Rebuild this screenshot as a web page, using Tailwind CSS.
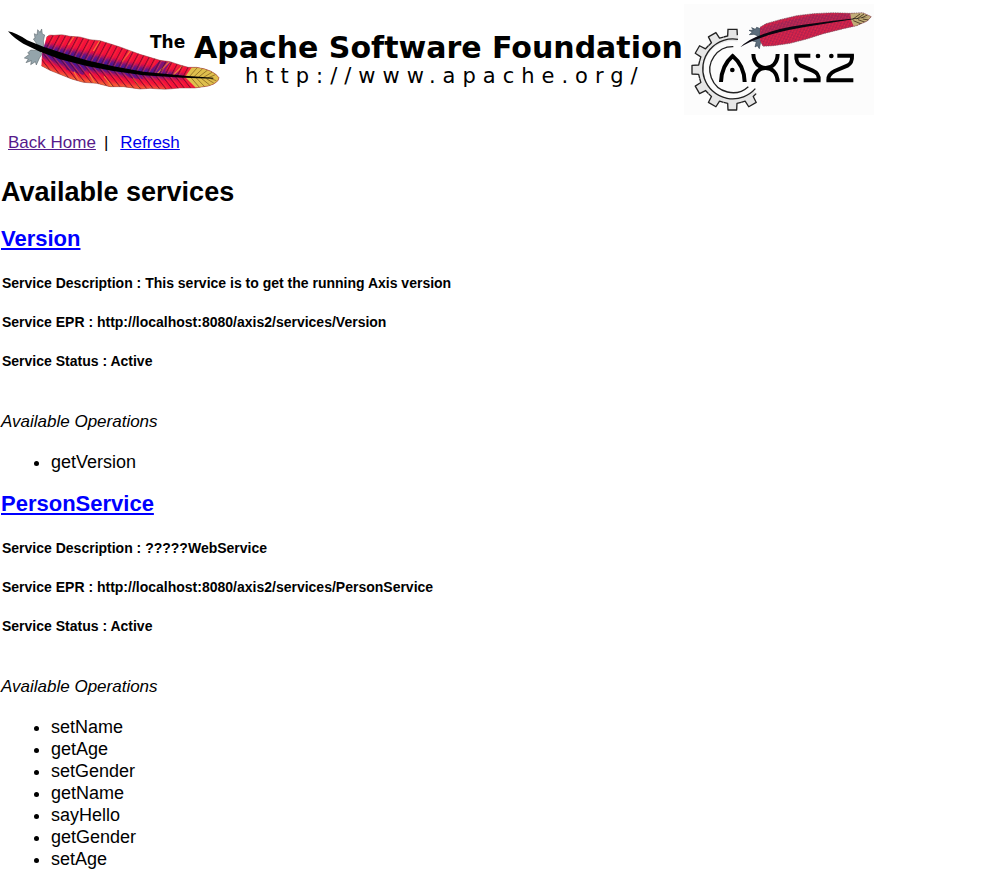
<!DOCTYPE html>
<html lang="en">
<head>
<meta charset="utf-8">
<meta name="viewport" content="width=device-width, initial-scale=1">
<title>List Services</title>
<script src="https://cdn.jsdelivr.net/npm/@tailwindcss/browser@4"></script>
</head>
<body class="bg-white font-['Liberation_Sans',Arial,sans-serif] text-black">
<header class="flex items-start pl-2 pt-1">
  <svg class="h-[111px] w-[676px] shrink-0" viewBox="8 4 676 111" role="img" aria-label="The Apache Software Foundation">
    <defs>
      <pattern id="barbUp" width="19" height="90" patternUnits="userSpaceOnUse" patternTransform="skewX(-28)">
        <path d="M2 0V90" stroke="#5a0a24" stroke-width="2.5"/>
        <path d="M7 0V90" stroke="#ff3a38" stroke-width="3" opacity=".6"/>
      </pattern>
      <pattern id="barbDown" width="19" height="90" patternUnits="userSpaceOnUse" patternTransform="skewX(38)">
        <path d="M2 0V90" stroke="#5a0a24" stroke-width="2.5"/>
        <path d="M7 0V90" stroke="#ff3a38" stroke-width="3" opacity=".6"/>
      </pattern>
      <clipPath id="vane"><path d="M140 66Q148 57 162 61L185 59L210 64L240 66L270 74L300 77L335 88L360 96L390 107L420 118L450 127L480 136L510 140L540 150L565 157L590 157Q640 164 657 188Q656 204 625 213L585 219L540 219L495 223L450 220L420 222L370 215L330 215L290 205L250 202L215 192L180 178L150 166L124 152L126 118Z"/></clipPath>
      <filter id="soften" x="-10%" y="-20%" width="120%" height="140%"><feGaussianBlur stdDeviation="6"/></filter>
    </defs>
    <g transform="translate(0 15) scale(.33333)">
      <g fill="#94a4ab" stroke="#4c585e" stroke-width="1.5">
        <path d="M112 89L100 72L105 70L103 56L111 60L113 44L120 52L125 42L127 57L134 60L130 78L133 99Z"/>
        <path d="M120 107L92 105L83 114L89 117L73 129L85 132L78 143L94 137L92 149L106 140L109 150L119 128L126 118Z"/>
      </g>
      <g clip-path="url(#vane)">
        <rect x="110" y="40" width="560" height="200" fill="#f5103a"/>
        <path d="M124 84L180 98L280 120L360 142L430 156L480 166L540 177L560 188L490 188L400 186L320 173L240 164L180 149L126 126Z" fill="#4a1294" filter="url(#soften)"/>
        <path d="M448 170L478 138L512 142L488 176ZM370 170L390 188L430 193L415 172ZM190 140L260 158L250 180L200 164Z" fill="#5a148c" opacity=".75"/>
        <path d="M124 146L170 168L230 188L290 198L360 208L440 215L500 219V240H120Z" fill="#f7a235" opacity=".7" filter="url(#soften)"/>
        <path d="M225 60L205 90M300 76L280 108M392 107L366 140M508 140L470 178M548 152L520 180M236 196L222 170M284 204L268 176M336 214L312 184M420 218L398 190" stroke="#f89038" stroke-width="4" opacity=".8"/>
        <path d="M100 40H700V188L555 184L400 170L300 151L200 128L124 102Z" fill="url(#barbUp)"/>
        <path d="M124 102L200 128L300 151L400 170L555 184L700 188V240H100Z" fill="url(#barbDown)"/>
        <path d="M555 186L580 150H670V226H595Z" fill="#dfbf4d"/>
        <path d="M567 186L592 158M581 186L608 161M595 187L623 165M609 188L636 172M623 189L646 179M573 188L600 219M589 189L615 216M604 190L629 210M619 191L641 204M632 191L649 197" fill="none" stroke="#765319" stroke-width="2"/>
      </g>
      <path d="M140 66Q148 57 162 61L185 59L210 64L240 66L270 74L300 77L335 88L360 96L390 107L420 118L450 127L480 136L510 140L540 150L565 157L590 157Q640 164 657 188Q656 204 625 213L585 219L540 219L495 223L450 220L420 222L370 215L330 215L290 205L250 202L215 192L180 178L150 166L124 152" fill="none" stroke="#8b4040" stroke-width="1.5"/>
      <path d="M24 49Q48 53 82 76L130 95L190 115L260 136L340 154L430 170L555 182L640 188V191L550 188L430 181L340 168L260 153L180 133L120 110L70 86Q42 70 24 49Z" fill="#000"/>
    </g>
    <g fill="#000" font-family="'DejaVu Sans', Verdana, sans-serif">
      <text x="150" y="48" font-size="17" font-weight="700">The</text>
      <text x="194" y="58" font-size="30" font-weight="700">Apache Software Foundation</text>
      <text x="245" y="83" class="text-[21px] tracking-[7px]">http://www.apache.org/</text>
    </g>
  </svg>
  <svg class="h-[111px] w-[190px] shrink-0" viewBox="12 12 570 333" role="img" aria-label="Axis2">
    <defs>
      <path id="tooth" d="M59 235L56 223L36 222V196L56 195L59 183L74 187A86 86 0 0 0 74 231Z" fill="#e6e6e6"/>
      <path id="rim" d="M59 235L56 223L36 222V196L56 195L59 183" fill="none" stroke="#222" stroke-width="4" stroke-linejoin="round"/>
      <pattern id="mottle" width="13" height="11" patternUnits="userSpaceOnUse" patternTransform="rotate(-24)">
        <path d="M0 3L7 1M6 8L12 6" stroke="#6c2a62" stroke-width="2.5"/><path d="M2 8L5 6M9 3L12 1" stroke="#ef5160" stroke-width="2"/>
      </pattern>
      <clipPath id="vaneSmall"><path d="M240 82L258 71L300 59L350 47L400 41L460 38L510 40L548 38L574 50L562 63L530 77L490 86L430 101L380 117L330 130L280 137L249 139L240 122Z"/></clipPath>
    </defs>
    <rect x="12" y="12" width="570" height="333" fill="#fcfcfc"/>
    <g>
      <use href="#tooth"/><use href="#tooth" transform="rotate(30 157 209)"/><use href="#tooth" transform="rotate(60 157 209)"/><use href="#tooth" transform="rotate(90 157 209)"/>
      <use href="#tooth" transform="rotate(-30 157 209)"/><use href="#tooth" transform="rotate(-60 157 209)"/><use href="#tooth" transform="rotate(-90 157 209)"/><use href="#tooth" transform="rotate(-120 157 209)"/>
      <use href="#rim"/><use href="#rim" transform="rotate(30 157 209)"/><use href="#rim" transform="rotate(60 157 209)"/>
      <use href="#rim" transform="rotate(-30 157 209)"/><use href="#rim" transform="rotate(-60 157 209)"/><use href="#rim" transform="rotate(-90 157 209)"/><use href="#rim" transform="rotate(-120 157 209)"/>
      <path d="M131 111L143 108L144 88H171L172 106" fill="none" stroke="#222" stroke-width="4"/>
      <path d="M176 102L190 106L186 132L172 126Z" fill="#fcfcfc"/>
    </g>
    <path d="M174 118A90 90 0 1 0 226 266" fill="none" stroke="#222" stroke-width="4"/>
    <path d="M160 140A69 69 0 1 0 205 260" fill="none" stroke="#222" stroke-width="4"/>
    <g fill="none" stroke="#000" stroke-width="12">
      <path d="M123 246C124 208 137 186 158 168C180 186 193 208 194 246"/>
      <path d="M220 162C221 190 238 204 257 204S292 190 293 162M220 246C221 218 238 204 257 204S292 218 293 246"/>
      <path d="M319 162V246"/>
      <path d="M391 167H349C348 184 352 191 363 197L398 212C414 219 417 227 416 241H371"/>
      <path d="M472 167H516C517 184 513 191 502 197L464 213C449 220 444 228 445 241H520"/>
    </g>
    <g fill="#000"><circle cx="157" cy="210" r="7"/><circle cx="346" cy="239" r="7"/><circle cx="414" cy="168" r="7"/><circle cx="454" cy="168" r="7"/></g>
    <path d="M234 108L222 103L208 104L217 96L207 91L220 91L215 83L226 88L230 82L241 86L240 108L243 120L238 146L232 137L225 141L229 125L218 123L231 116Z" fill="#5c6d7c" stroke="#354452" stroke-width="2"/>
    <g clip-path="url(#vaneSmall)">
      <rect x="230" y="30" width="350" height="120" fill="#d21e46"/>
      <path d="M240 86L310 65L400 46L520 41V56L410 67L310 88L240 103Z" fill="#87295c" opacity=".4"/>
      <rect x="230" y="30" width="350" height="120" fill="url(#mottle)" opacity=".6"/>
      <path d="M510 35H580V80H522L514 62Z" fill="#c1ac77"/>
      <path d="M518 58L540 42M530 57L552 42M544 54L562 45M520 62L544 72M534 59L556 67M548 57L566 60" stroke="#554529" stroke-width="3"/>
    </g>
    <path d="M240 82L258 71L300 59L350 47L400 41L460 38L510 40L548 38L574 50L562 63L530 77L490 86L430 101L380 117L330 130L280 137L249 139L240 122" fill="none" stroke="#76505a" stroke-width="2" stroke-dasharray="5 2"/>
    <path d="M181 142Q201 119 245 104Q300 83 370 74L460 62L568 50L462 67L370 82Q290 96 244 113Q208 124 181 142Z" fill="#090711"/>
  </svg>
</header>

<nav class="mt-[17px] flex gap-2 pl-2 text-[17px] leading-[22px]" aria-label="Page">
  <a href="#home" class="text-[#551a8b] underline">Back Home</a>
  <span aria-hidden="true">|</span>
  <a href="#refresh" class="ml-1 text-[#0000ee] underline">Refresh</a>
</nav>

<main class="px-px">
  <h1 class="mt-[22px] text-[27px] font-bold leading-8">Available services</h1>

  <section>
    <h2 class="mt-[18px] text-[22px] font-bold leading-[26px]"><a href="#Version" class="text-[#0000ff] underline">Version</a></h2>
    <div class="mt-[23px] flex flex-col gap-[23px] pl-px text-[14px] font-bold leading-4">
      <p>Service Description : This service is to get the running Axis version</p>
      <p>Service EPR : http://localhost:8080/axis2/services/Version</p>
      <p>Service Status : Active</p>
    </div>
    <p class="mt-[43px] text-[17px] italic leading-5">Available Operations</p>
    <ul class="mt-[19px] list-disc pl-[50px] text-[18px] leading-[22px]">
      <li>getVersion</li>
    </ul>
  </section>

  <section>
    <h2 class="mt-[18px] text-[22px] font-bold leading-[26px]"><a href="#PersonService" class="text-[#0000ff] underline">PersonService</a></h2>
    <div class="mt-[23px] flex flex-col gap-[23px] pl-px text-[14px] font-bold leading-4">
      <p>Service Description : ?????WebService</p>
      <p>Service EPR : http://localhost:8080/axis2/services/PersonService</p>
      <p>Service Status : Active</p>
    </div>
    <p class="mt-[43px] text-[17px] italic leading-5">Available Operations</p>
    <ul class="mt-[19px] list-disc pl-[50px] text-[18px] leading-[22px]">
      <li>setName</li>
      <li>getAge</li>
      <li>setGender</li>
      <li>getName</li>
      <li>sayHello</li>
      <li>getGender</li>
      <li>setAge</li>
    </ul>
  </section>
</main>
</body>
</html>
